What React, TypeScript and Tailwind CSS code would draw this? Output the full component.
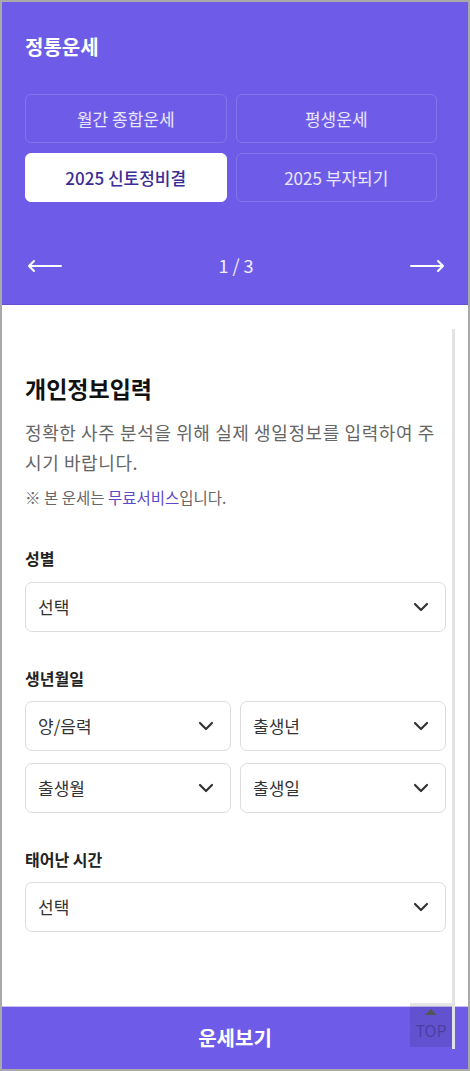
import { useState } from 'react'

const FONT = { fontFamily: '"Noto Sans CJK KR", "Noto Sans", sans-serif' }

const TABS = ['월간 종합운세', '평생운세', '2025 신토정비결', '2025 부자되기']

/** 드롭다운 꺾쇠 */
const Chevron = () => (
  <svg width="16" height="10" viewBox="0 0 16 10" fill="none" className="shrink-0">
    <path d="M2 2l6 6 6-6" stroke="#333" strokeWidth="2.2" strokeLinecap="round" strokeLinejoin="round" />
  </svg>
)

/** 긴 화살표 */
const Arrow = ({ dir }: { dir: 'left' | 'right' }) => (
  <svg width="36" height="14" viewBox="0 0 36 14" fill="none">
    {dir === 'left' ? (
      <path d="M34 7H2M7 2L2 7l5 5" stroke="#fff" strokeWidth="2" strokeLinecap="round" strokeLinejoin="round" />
    ) : (
      <path d="M2 7h32M29 2l5 5-5 5" stroke="#fff" strokeWidth="2" strokeLinecap="round" strokeLinejoin="round" />
    )}
  </svg>
)

const SelectBox = ({ label }: { label: string }) => (
  <div className="flex h-[50px] items-center justify-between rounded-[7px] border border-[#dcdcdc] bg-white pl-[12px] pr-[16px]">
    <span className="text-[17px] text-[#333]">{label}</span>
    <Chevron />
  </div>
)

const App = () => {
  const [active, setActive] = useState(2)

  return (
    <div
      className="relative flex h-[1071px] w-[470px] flex-col overflow-hidden border-2 border-[#a9a9a9] bg-white"
      style={FONT}
    >
      {/* 상단 헤더 */}
      <div className="h-[303px] shrink-0 border-b border-[#6150d6] bg-[#6e5ce8] pl-[23px] pr-[31px]">
        <h1 className="mt-[31px] text-[20px] font-bold leading-[28px] text-white">정통운세</h1>

        <div className="mt-[33px] grid grid-cols-2 gap-x-[9px] gap-y-[10px]">
          {TABS.map((t, i) => (
            <button
              key={t}
              onClick={() => setActive(i)}
              className={`h-[49px] rounded-[6px] border text-[17px] ${
                active === i
                  ? 'border-white bg-white font-medium text-[#3b2d94]'
                  : 'border-white/15 text-white/85'
              }`}
            >
              {t}
            </button>
          ))}
        </div>

        <div className="mr-[-8px] mt-[50px] flex items-center justify-between pl-[2px]">
          <Arrow dir="left" />
          <span className="text-[18px] text-white/90">1 / 3</span>
          <Arrow dir="right" />
        </div>
      </div>

      {/* 입력 폼 */}
      <div className="flex-1 pl-[23px] pr-[22px] pt-[68px]">
        <h2 className="text-[23px] font-bold leading-[30px] text-[#111]">개인정보입력</h2>
        <p className="mt-[14px] text-[18px] leading-[30px] tracking-[0.6px] text-[#666]">
          정확한 사주 분석을 위해 실제 생일정보를 입력하여 주시기 바랍니다.
        </p>
        <p className="mt-[10px] text-[15.5px] leading-[20px] text-[#666]">
          ※ 본 운세는 <span className="text-[#5a48c8]">무료서비스</span>입니다.
        </p>

        <div className="mt-[40px] text-[16px] font-bold leading-[22px] text-[#222]">성별</div>
        <div className="mt-[13px]">
          <SelectBox label="선택" />
        </div>

        <div className="mt-[35px] text-[16px] font-bold leading-[22px] text-[#222]">생년월일</div>
        <div className="mt-[12px] grid grid-cols-2 gap-x-[9px] gap-y-[12px]">
          <SelectBox label="양/음력" />
          <SelectBox label="출생년" />
          <SelectBox label="출생월" />
          <SelectBox label="출생일" />
        </div>

        <div className="mt-[35px] text-[16px] font-bold leading-[22px] text-[#222]">태어난 시간</div>
        <div className="mt-[12px]">
          <SelectBox label="선택" />
        </div>
      </div>

      {/* 하단 버튼 */}
      <button className="h-[63px] shrink-0 border-t border-[#c9c2f3] bg-[#6e5ce8] text-[20px] font-bold text-white">
        운세보기
      </button>

      {/* 스크롤바 */}
      <div className="absolute left-[450px] top-[327px] z-20 h-[720px] w-[3px] bg-[#e2e2e2]" />

      {/* TOP 버튼 */}
      <div className="absolute left-[408px] top-[1001px] z-10 flex h-[44px] w-[42px] flex-col items-center bg-black/10">
        <div className="mt-[6px] h-0 w-0 border-x-[6px] border-b-[6px] border-x-transparent border-b-[#555]" />
        <span className="mt-[6px] text-[16px] leading-[18px] text-black/25">TOP</span>
      </div>
    </div>
  )
}

export default App
